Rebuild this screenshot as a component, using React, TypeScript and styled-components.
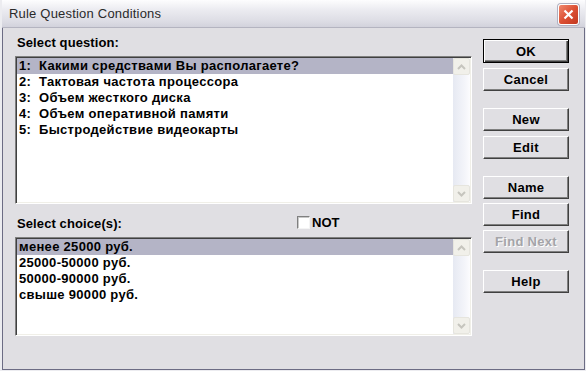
import React from 'react';
import styled, { createGlobalStyle } from 'styled-components';

const FACE = '#e0dfe3';
const SELECTED = '#b4b4c6';
const FONT = "'Liberation Sans', Arial, sans-serif";

const GlobalStyle = createGlobalStyle`
  html, body {
    margin: 0;
    padding: 0;
    background: ${FACE};
  }
  body {
    font-family: ${FONT};
  }
`;

const Window = styled.div`
  width: 586px;
  height: 371px;
  box-sizing: border-box;
  border-left: 2px solid #ececf0;
  border-right: 1px solid #ececf0;
  border-bottom: 1px solid #ececf0;
  display: flex;
  flex-direction: column;
`;

const Frame = styled.div`
  flex: 1;
  display: flex;
  flex-direction: column;
  border: 1px solid #6c6c84;
  border-top: none;
  background: ${FACE};
`;

const TitleBar = styled.div`
  height: 27px;
  border-bottom: 1px solid #b4b4c0;
  margin: 0 -1px;
  padding: 0 6px 0 7px;
  display: flex;
  align-items: center;
  justify-content: space-between;
  background: linear-gradient(#fdfdfe, #ececf1 35%, #dcdce4 80%, #d2d2dc);
`;

const Title = styled.span`
  font-size: 13px;
  color: #2a2a2a;
  letter-spacing: 0.2px;
`;

const CloseButton = styled.div`
  width: 19px;
  height: 19px;
  margin-top: 1px;
  border: 1px solid #fff;
  border-radius: 3px;
  background: linear-gradient(135deg, #f08a70, #dc5034 50%, #c23820);
  display: flex;
  align-items: center;
  justify-content: center;
  box-shadow: 0 0 0 1px #b0b0c0;
`;

const Body = styled.div`
  flex: 1;
  display: flex;
  gap: 11px;
  padding: 0 15px 0 12px;
`;

const LeftColumn = styled.div`
  width: 457px;
  display: flex;
  flex-direction: column;
  padding-top: 7px;
`;

const Label = styled.div`
  font-size: 13px;
  font-weight: bold;
  line-height: 16px;
  color: #000;
  padding-left: 2px;
  letter-spacing: 0.1px;
`;

const QuestionLabel = styled(Label)`
  margin-bottom: 5px;
`;

const ListBox = styled.div<{ $height: number }>`
  height: ${(p) => p.$height}px;
  box-sizing: border-box;
  display: flex;
  background: #fff;
  border-top: 1px solid #808080;
  border-left: 1px solid #808080;
  border-right: 1px solid #fff;
  border-bottom: 1px solid #fff;
  box-shadow: inset 1px 1px 0 #404040, inset -1px -1px 0 #f0efe8;
  padding: 1px;
`;

const Items = styled.div`
  flex: 1;
  display: flex;
  flex-direction: column;
`;

const Item = styled.div<{ $selected?: boolean }>`
  height: 16px;
  line-height: 16px;
  padding-left: 2px;
  font-size: 13px;
  font-weight: bold;
  letter-spacing: 0.3px;
  white-space: pre;
  color: #000;
  background: ${(p) => (p.$selected ? SELECTED : 'transparent')};
`;

const ScrollBar = styled.div`
  width: 17px;
  display: flex;
  flex-direction: column;
  justify-content: space-between;
  background: linear-gradient(to right, #e6e9f2, #f4f5fa 70%, #fcfcfe);
`;

const ScrollArrow = styled.div`
  width: 17px;
  height: 17px;
  box-sizing: border-box;
  border: 1px solid #e6e5de;
  border-radius: 2px;
  background: #f1f0ea;
  display: flex;
  align-items: center;
  justify-content: center;
`;

const ChoiceRow = styled.div`
  height: 33px;
  display: grid;
  grid-template-columns: 282px auto;
  align-items: end;
  padding-bottom: 5px;
  box-sizing: border-box;
`;

const CheckLabel = styled.label`
  display: flex;
  align-items: center;
  gap: 2px;
  height: 16px;
  font-size: 13px;
  font-weight: bold;
  margin-bottom: 2px;
`;

const CheckBox = styled.span`
  width: 13px;
  height: 13px;
  box-sizing: border-box;
  background: #fff;
  border-top: 1px solid #808080;
  border-left: 1px solid #808080;
  border-right: 1px solid #f4f4f4;
  border-bottom: 1px solid #f4f4f4;
  box-shadow: inset 1px 1px 0 #c8c8c8;
`;

const RightColumn = styled.div`
  width: 86px;
  display: flex;
  flex-direction: column;
  gap: 17px;
  padding-top: 11px;
`;

const ButtonGroup = styled.div<{ $gap: number }>`
  display: flex;
  flex-direction: column;
  gap: ${(p) => p.$gap}px;
`;

const Button = styled.div<{ $default?: boolean; $disabled?: boolean }>`
  height: ${(p) => (p.$default ? 24 : 23)}px;
  box-sizing: border-box;
  display: flex;
  align-items: center;
  justify-content: center;
  font-size: 13px;
  font-weight: bold;
  letter-spacing: 0.3px;
  color: ${(p) => (p.$disabled ? '#a4a4a8' : '#000')};
  text-shadow: ${(p) => (p.$disabled ? '1px 1px 0 #fff' : 'none')};
  background: ${FACE};
  border-style: solid;
  border-width: 1px;
  border-color: ${(p) => (p.$default ? '#000' : '#fff #404040 #404040 #fff')};
  box-shadow: ${(p) =>
    p.$default
      ? 'inset 1px 1px 0 #fff, inset -1px -1px 0 #404040, inset -2px -2px 0 #808080'
      : 'inset -1px -1px 0 #808080'};
`;

const Chevron = ({ up }: { up?: boolean }) => (
  <svg width="9" height="6" viewBox="0 0 9 6">
    <path
      d={up ? 'M1 5 L4.5 1.5 L8 5' : 'M1 1 L4.5 4.5 L8 1'}
      fill="none"
      stroke="#c6c5be"
      strokeWidth="2"
    />
  </svg>
);

type ListProps = {
  items: string[];
  height: number;
};

function List({ items, height }: ListProps) {
  return (
    <ListBox $height={height}>
      <Items>
        {items.map((item, i) => (
          <Item key={item} $selected={i === 0}>
            {item}
          </Item>
        ))}
      </Items>
      <ScrollBar>
        <ScrollArrow>
          <Chevron up />
        </ScrollArrow>
        <ScrollArrow>
          <Chevron />
        </ScrollArrow>
      </ScrollBar>
    </ListBox>
  );
}

const questions = [
  '1:  Какими средствами Вы располагаете?',
  '2:  Тактовая частота процессора',
  '3:  Объем жесткого диска',
  '4:  Объем оперативной памяти',
  '5:  Быстродействие видеокарты',
];

const choices = [
  'менее 25000 руб.',
  '25000-50000 руб.',
  '50000-90000 руб.',
  'свыше 90000 руб.',
];

export default function App() {
  return (
    <>
      <GlobalStyle />
      <Window>
        <Frame>
          <TitleBar>
            <Title>Rule Question Conditions</Title>
            <CloseButton>
              <svg width="11" height="11" viewBox="0 0 11 11">
                <path d="M1.5 1.5 L9.5 9.5 M9.5 1.5 L1.5 9.5" stroke="#fff" strokeWidth="2.2" />
              </svg>
            </CloseButton>
          </TitleBar>
          <Body>
            <LeftColumn>
              <QuestionLabel>Select question:</QuestionLabel>
              <List items={questions} height={148} />
              <ChoiceRow>
                <Label>Select choice(s):</Label>
                <CheckLabel>
                  <CheckBox />
                  NOT
                </CheckLabel>
              </ChoiceRow>
              <List items={choices} height={99} />
            </LeftColumn>
            <RightColumn>
              <ButtonGroup $gap={5}>
                <Button $default>OK</Button>
                <Button>Cancel</Button>
              </ButtonGroup>
              <ButtonGroup $gap={5}>
                <Button>New</Button>
                <Button>Edit</Button>
              </ButtonGroup>
              <ButtonGroup $gap={4}>
                <Button>Name</Button>
                <Button>Find</Button>
                <Button $disabled>Find Next</Button>
              </ButtonGroup>
              <ButtonGroup $gap={5}>
                <Button>Help</Button>
              </ButtonGroup>
            </RightColumn>
          </Body>
        </Frame>
      </Window>
    </>
  );
}
